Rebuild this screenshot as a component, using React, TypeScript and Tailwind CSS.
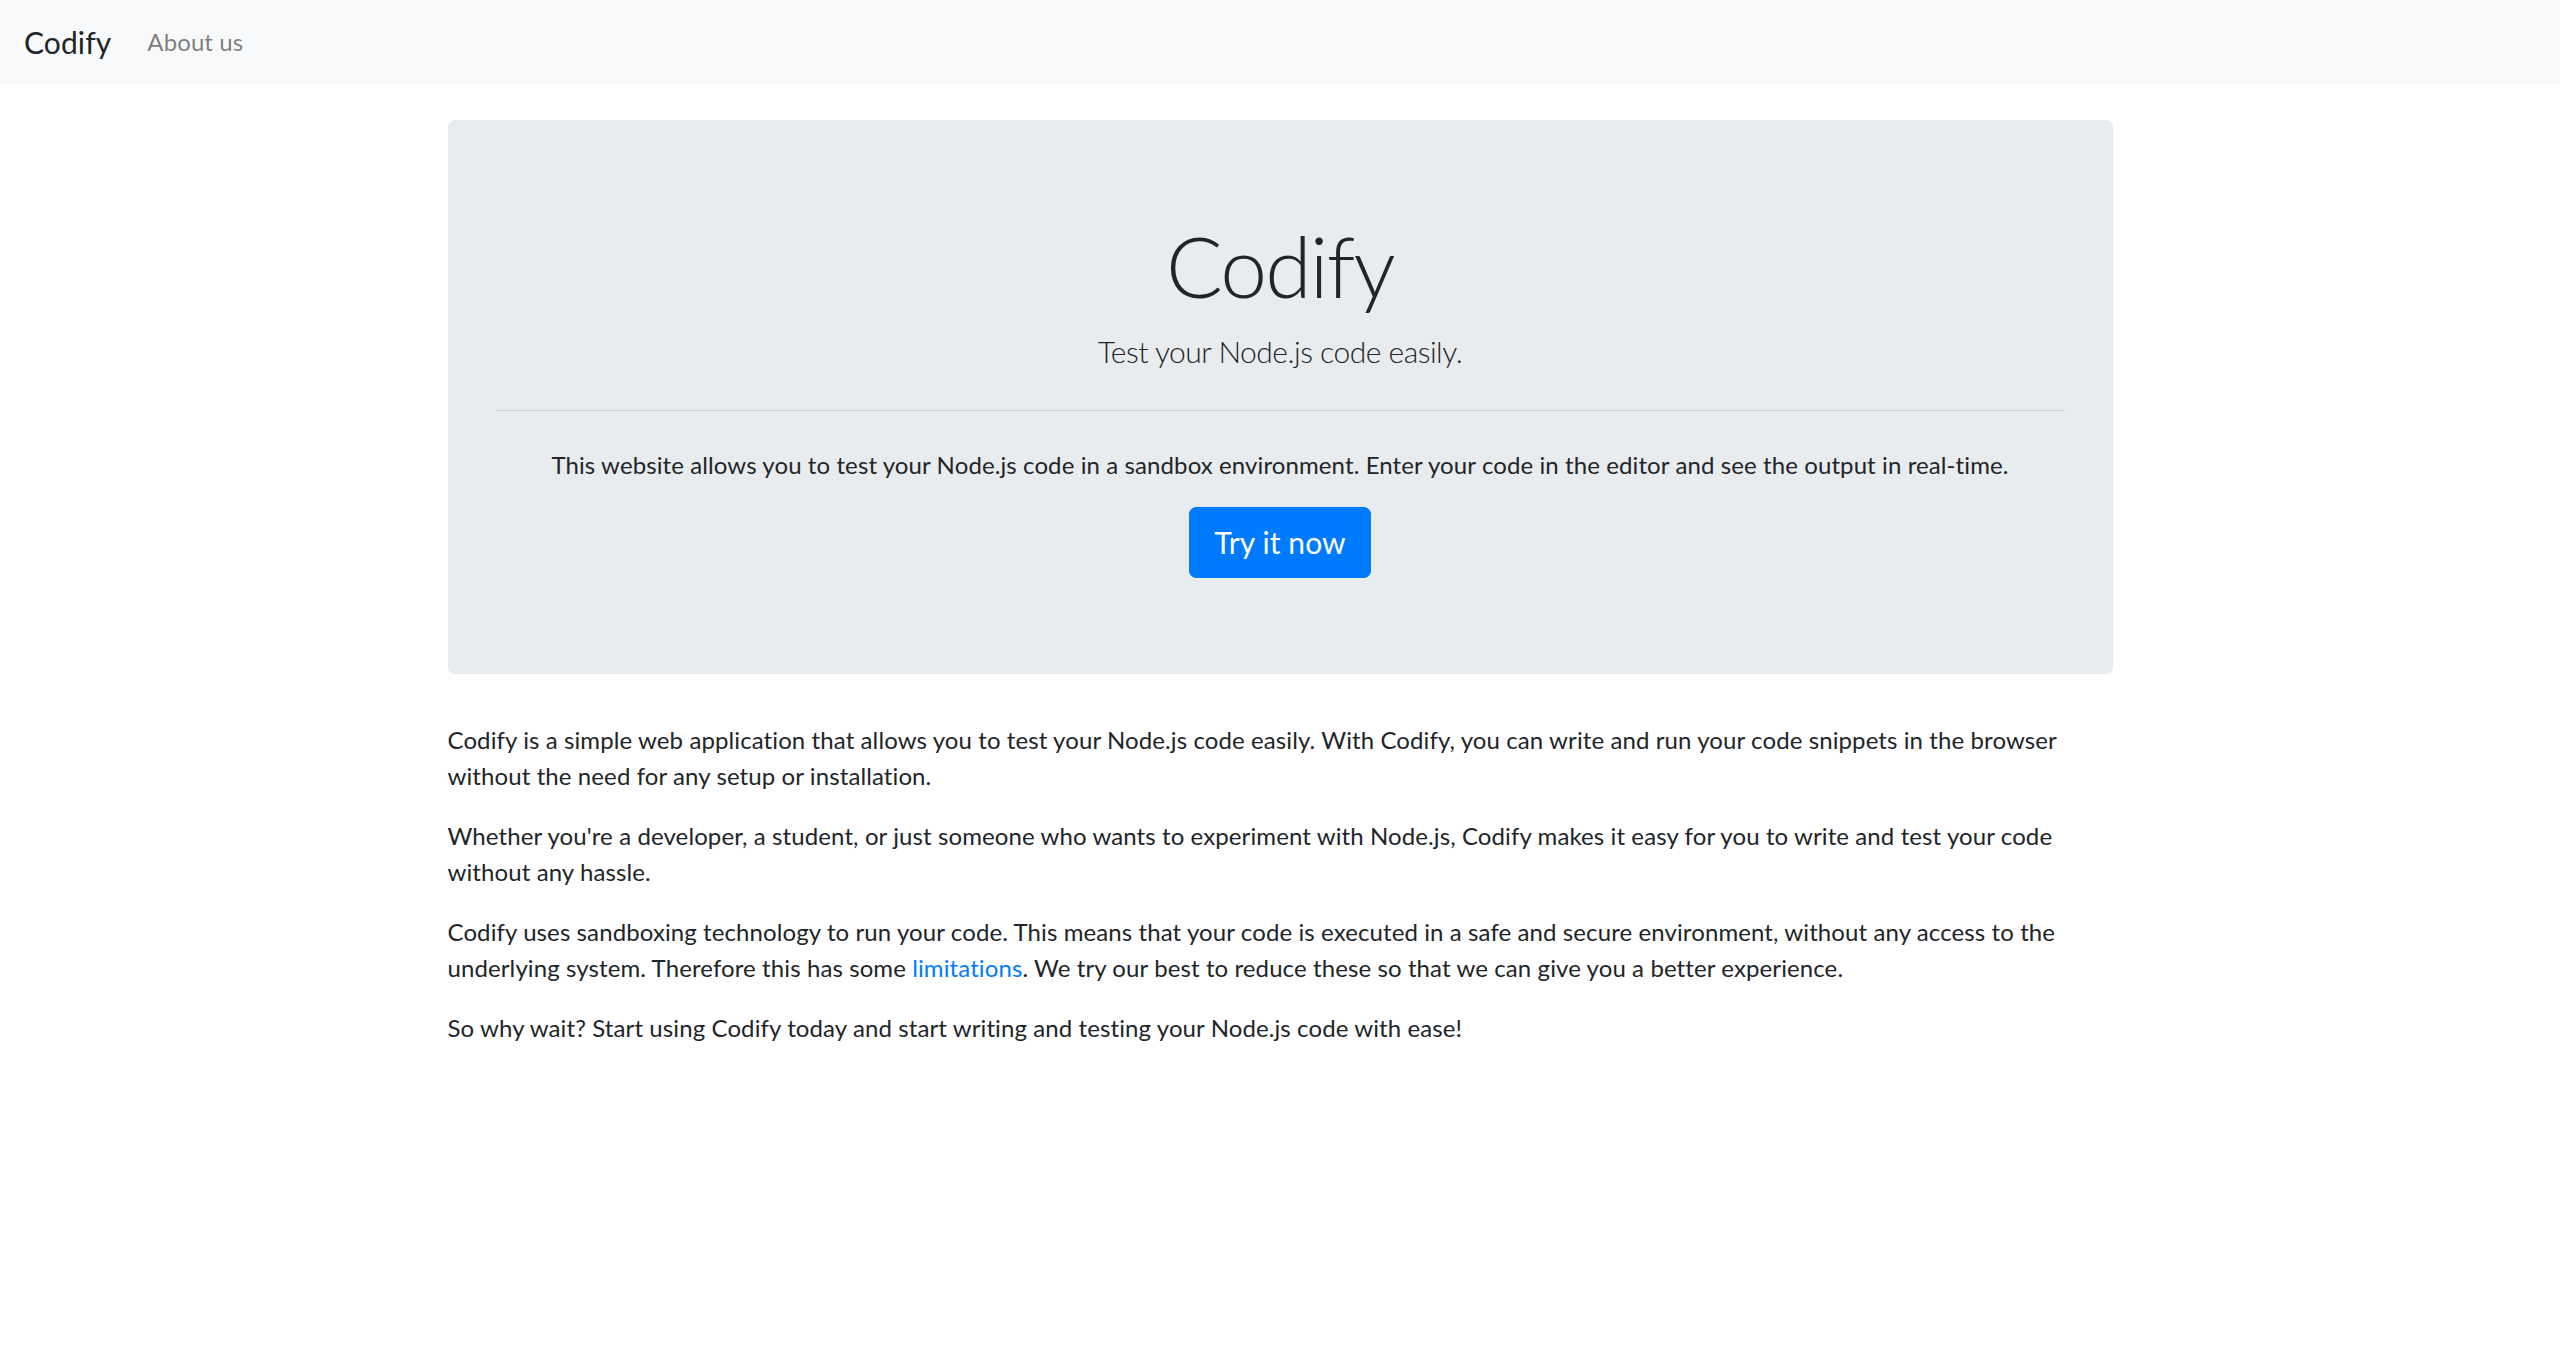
import React from 'react';

const font = { fontFamily: 'Lato, "Open Sans", sans-serif' };

const Navbar = () => (
  <nav className="flex items-center bg-[#f8f9fa] px-6 py-3 h-[84px]">
    <a href="#" className="mr-6 py-[7.5px] text-[30px] leading-[45px] text-[#212529]">
      Codify
    </a>
    <a href="#" className="px-3 py-3 text-[24px] leading-[36px] text-black/50">
      About us
    </a>
  </nav>
);

const Jumbotron = () => (
  <div className="mb-12 rounded-[7px] bg-[#e9ecef] px-12 py-24 text-center">
    <h1 className="mb-3 text-[84px] font-light leading-[100.8px] tracking-[-1.8px] text-[#212529]">
      Codify
    </h1>
    <p className="text-[30px] font-light leading-[45px] tracking-[-0.5px]">
      Test your Node.js code easily.
    </p>
    <hr className="my-9 border-t-[1.5px] border-black/10" />
    <p className="mb-6">
      This website allows you to test your Node.js code in a sandbox environment. Enter your code in
      the editor and see the output in real-time.
    </p>
    <a
      href="#"
      className="inline-block rounded-[7px] border-[1.5px] border-[#007bff] bg-[#007bff] px-6 py-3 text-[30px] leading-[45px] text-white"
    >
      Try it now
    </a>
  </div>
);

export default function App() {
  return (
    <div
      className="min-h-screen bg-white text-[24px] leading-[36px] tracking-[0.1px] text-[#212529]"
      style={font}
    >
      <Navbar />
      <main className="mx-auto mt-9 w-[1710px] px-[22.5px]">
        <Jumbotron />
        <p className="mb-6">
          Codify is a simple web application that allows you to test your Node.js code easily. With
          Codify, you can write and run your code snippets in the browser without the need for any
          setup or installation.
        </p>
        <p className="mb-6">
          Whether you're a developer, a student, or just someone who wants to experiment with
          Node.js, Codify makes it easy for you to write and test your code without any hassle.
        </p>
        <p className="mb-6">
          Codify uses sandboxing technology to run your code. This means that your code is executed
          in a safe and secure environment, without any access to the underlying system. Therefore
          this has some{' '}
          <a href="#" className="text-[#007bff]">
            limitations
          </a>
          . We try our best to reduce these so that we can give you a better experience.
        </p>
        <p className="mb-6">
          So why wait? Start using Codify today and start writing and testing your Node.js code with
          ease!
        </p>
      </main>
    </div>
  );
}
